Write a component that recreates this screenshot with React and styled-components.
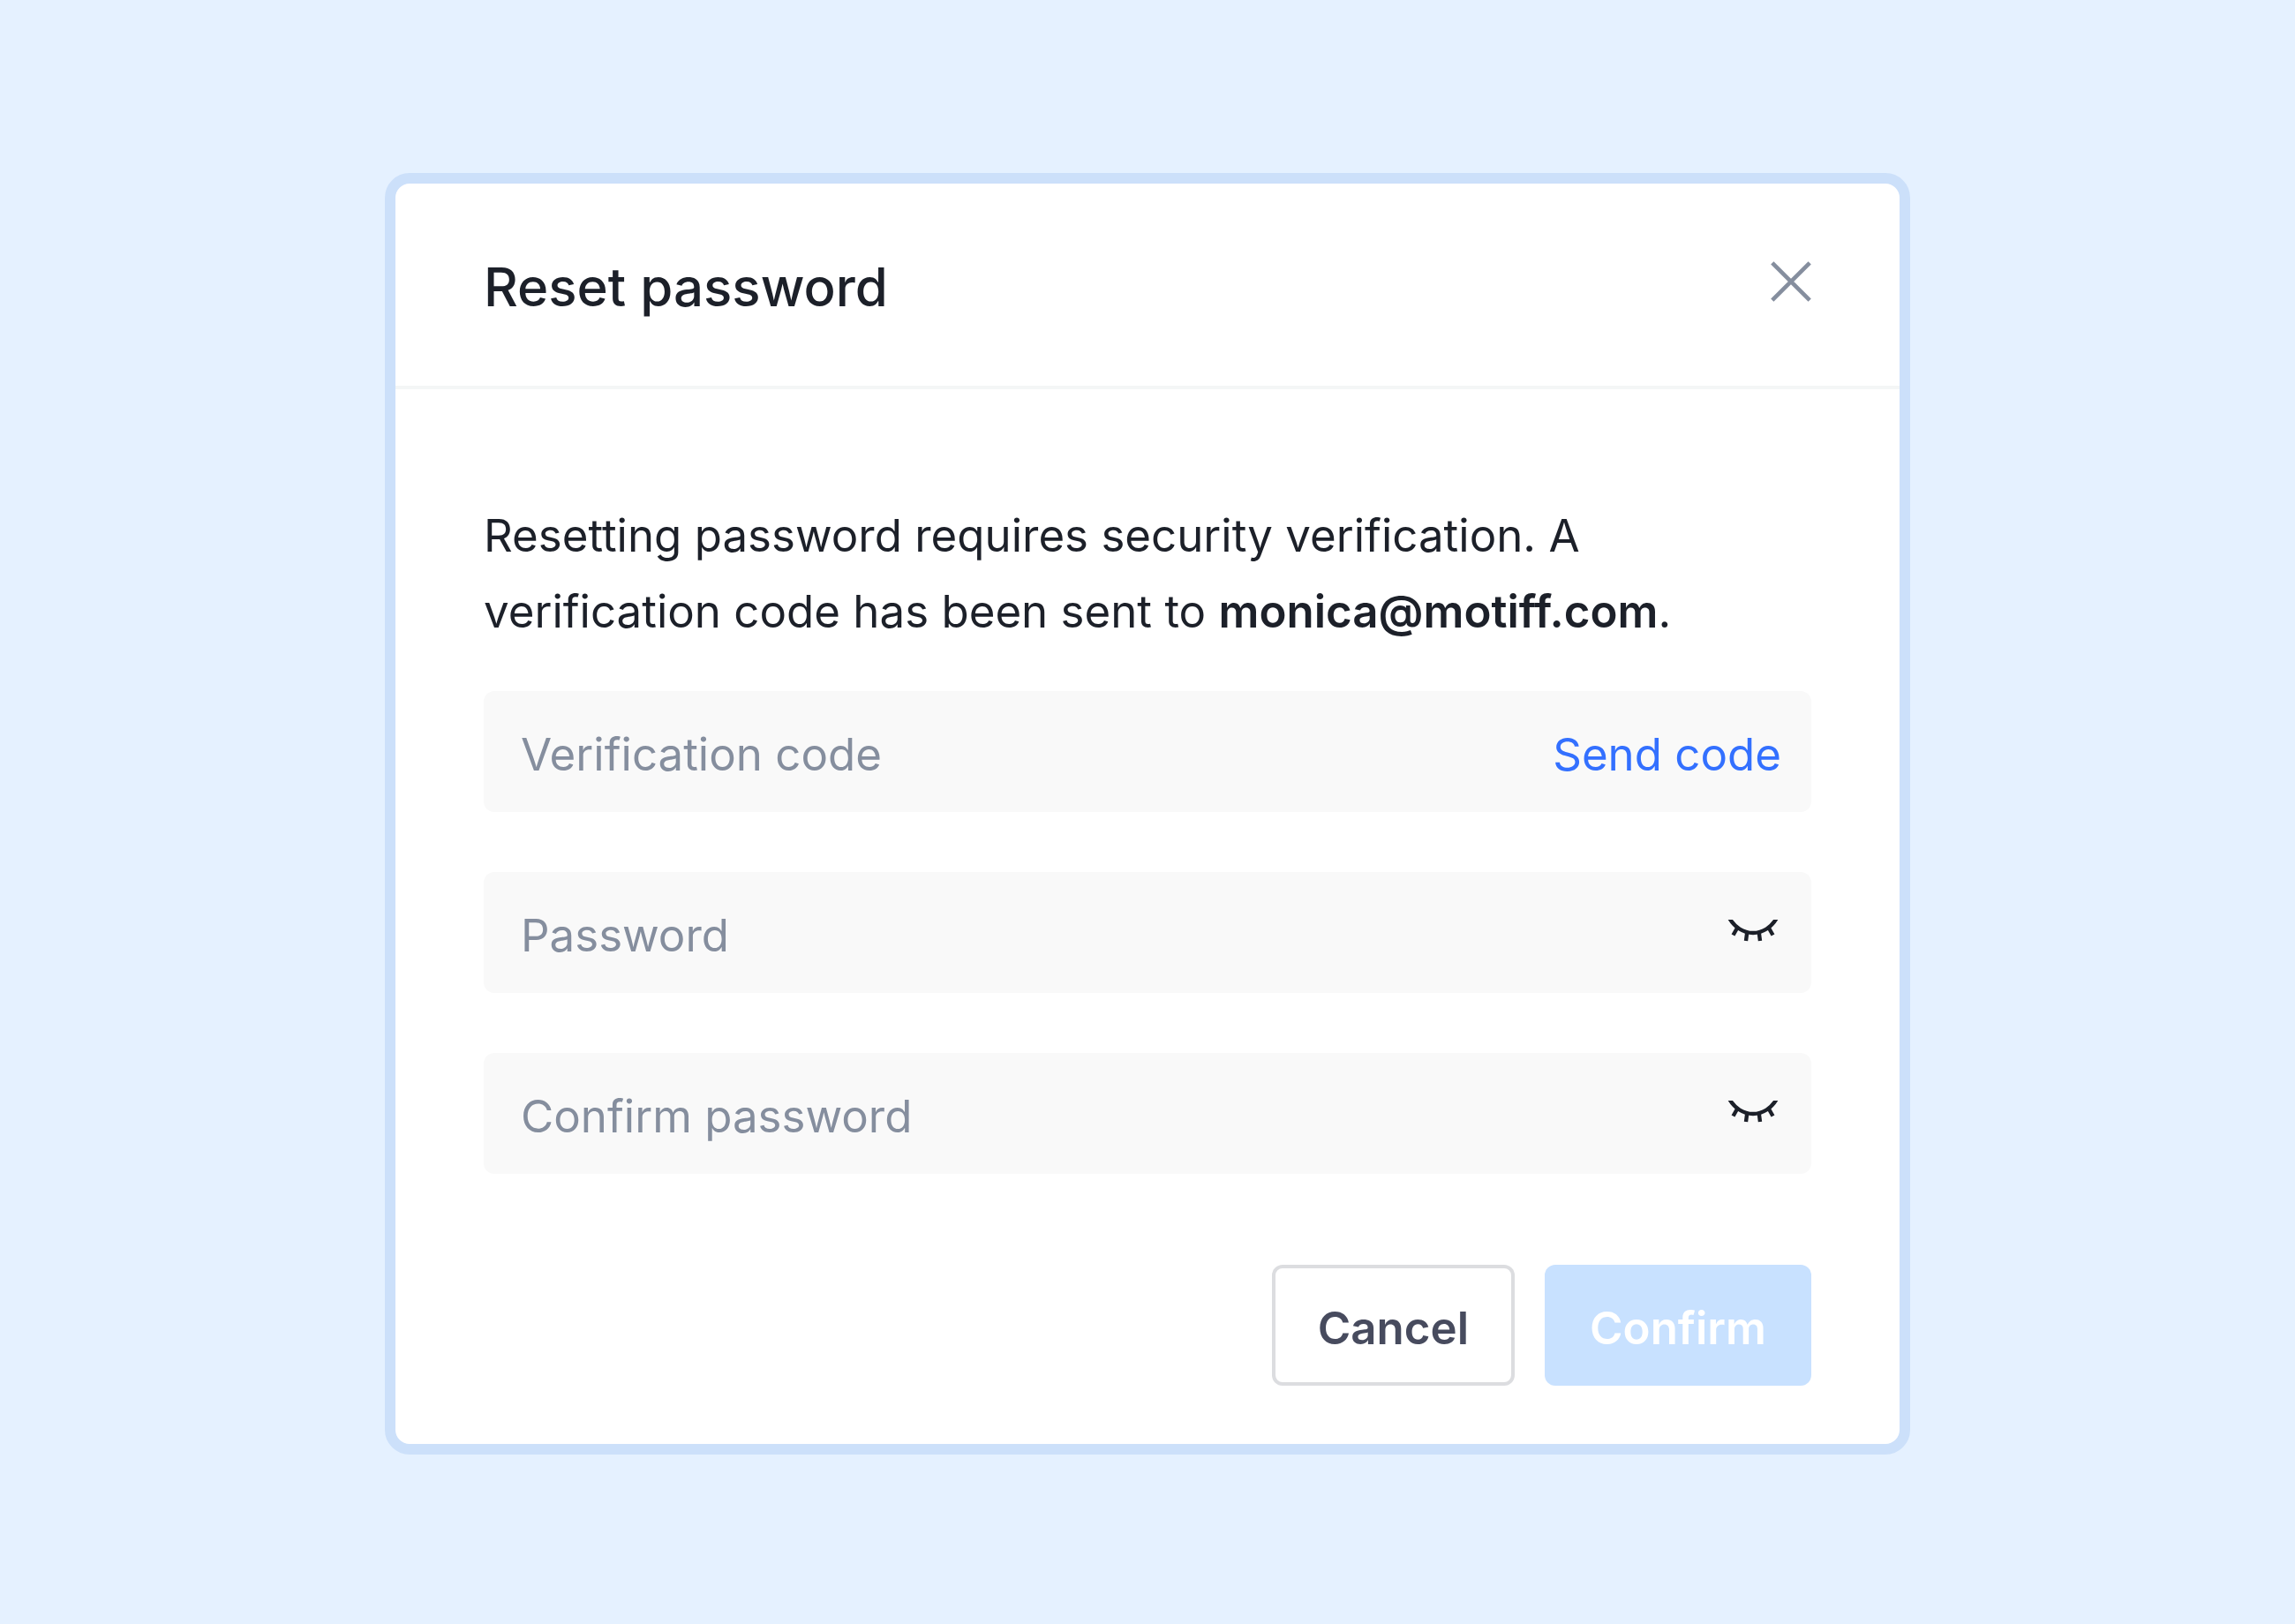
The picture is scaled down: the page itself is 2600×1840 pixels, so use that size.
import React, { useId, useState } from 'react';
import styled, { ThemeProvider, createGlobalStyle } from 'styled-components';

const theme = {
  colors: {
    page: '#e5f1ff',
    frame: '#cce0fa',
    text: '#1c2029',
    muted: '#858e9e',
    link: '#3370ff',
    field: '#f9f9f9',
    divider: '#f4f6f6',
    outline: '#dcdde0',
    cancel: '#474b5e',
    disabled: '#c8e1ff',
  },
  text: '51px',
  radius: '12px',
};

const GlobalStyle = createGlobalStyle`
  *, *::before, *::after {
    box-sizing: border-box;
  }
  body {
    margin: 0;
    background: ${theme.colors.page};
    font-family: Inter, 'Liberation Sans', sans-serif;
    color: ${theme.colors.text};
  }
  button, input {
    font: inherit;
    color: inherit;
    border: 0;
    margin: 0;
    padding: 0;
    background: none;
  }
  button {
    cursor: pointer;
  }
`;

const Page = styled.main`
  min-height: 100vh;
  padding: 196px 40px 192px;
`;

const Dialog = styled.section`
  max-width: 1728px;
  margin: 0 auto;
  background: white;
  border: 12px solid ${props => props.theme.colors.frame};
  border-radius: 28px;
`;

const Header = styled.header`
  display: flex;
  justify-content: space-between;
  align-items: flex-start;
  padding: 72px 100px 67px;
  border-bottom: 4px solid ${props => props.theme.colors.divider};
`;

const Title = styled.h1`
  margin: 0;
  font-size: 60px;
  font-weight: 500;
  line-height: 90px;
`;

const CloseButton = styled.button`
  height: 78px;
  color: ${props => props.theme.colors.muted};
  svg {
    display: block;
  }
`;

const Form = styled.form`
  padding: 123px 100px 66px;
  font-size: ${props => props.theme.text};
`;

const Message = styled.p`
  margin: 0 0 47px;
  line-height: 86px;
  strong {
    font-weight: 600;
  }
`;

const Fields = styled.div`
  display: flex;
  flex-direction: column;
  gap: 68px;
`;

const FieldRow = styled.div`
  display: flex;
  align-items: center;
  height: 137px;
  padding: 0 34px 0 42px;
  background: ${props => props.theme.colors.field};
  border-radius: ${props => props.theme.radius};
`;

const Input = styled.input`
  flex: 1;
  min-width: 0;
  height: 100%;
  padding-top: 6px;
  outline: none;
  &::placeholder {
    color: ${props => props.theme.colors.muted};
    opacity: 1;
  }
`;

const LinkButton = styled.button`
  height: 100%;
  padding-top: 6px;
  color: ${props => props.theme.colors.link};
`;

const IconButton = styled.button`
  svg {
    display: block;
  }
`;

const Actions = styled.footer`
  display: flex;
  justify-content: flex-end;
  gap: 34px;
  margin-top: 103px;
`;

const Button = styled.button`
  height: 137px;
  padding: 6px ${props => (props.$primary ? '51px' : '52px')} 0;
  font-weight: 600;
  border-radius: ${props => props.theme.radius};
  color: ${props => (props.$primary ? 'white' : props.theme.colors.cancel)};
  background: ${props => (props.$primary ? props.theme.colors.disabled : 'white')};
  box-shadow: ${props => (props.$primary ? 'none' : `inset 0 0 0 4px ${props.theme.colors.outline}`)};
`;

const CloseIcon = () => (
  <svg width="46" height="46" viewBox="0 0 46 46" fill="none" stroke="currentColor" strokeWidth="4.6" aria-hidden="true">
    <path d="M1.8 1.8 44.2 44.2M44.2 1.8 1.8 44.2" />
  </svg>
);

const ClosedEyeIcon = () => {
  const clip = useId();
  return (
    <svg width="64" height="64" viewBox="0 0 64 64" fill="none" stroke="currentColor" strokeWidth="4.4" aria-hidden="true">
      <clipPath id={clip}>
        <rect y="17" width="64" height="40" />
      </clipPath>
      <g clipPath={`url(#${clip})`}>
        <path d="M4.5 14C17.5 38 46.500 38 59.500 14" />
        <path d="M14.300 26 9.500 34.500M25.300 31 24 41M38.700 31 40 41M49.700 26 54.500 34.500" />
      </g>
    </svg>
  );
};

const PasswordField = ({ label }) => {
  const [visible, setVisible] = useState(false);
  return (
    <FieldRow>
      <Input type={visible ? 'text' : 'password'} placeholder={label} aria-label={label} />
      <IconButton type="button" aria-label="Toggle visibility" onClick={() => setVisible(!visible)}>
        <ClosedEyeIcon />
      </IconButton>
    </FieldRow>
  );
};

const App = () => (
  <ThemeProvider theme={theme}>
    <GlobalStyle />
    <Page>
      <Dialog role="dialog" aria-labelledby="dialog-title">
        <Header>
          <Title id="dialog-title">Reset password</Title>
          <CloseButton type="button" aria-label="Close">
            <CloseIcon />
          </CloseButton>
        </Header>
        <Form onSubmit={e => e.preventDefault()}>
          <Message>
            Resetting password requires security verification. A verification code has been sent to{' '}
            <strong>monica@motiff.com</strong>.
          </Message>
          <Fields>
            <FieldRow>
              <Input type="text" placeholder="Verification code" aria-label="Verification code" />
              <LinkButton type="button">Send code</LinkButton>
            </FieldRow>
            <PasswordField label="Password" />
            <PasswordField label="Confirm password" />
          </Fields>
          <Actions>
            <Button type="button">Cancel</Button>
            <Button type="submit" $primary disabled>
              Confirm
            </Button>
          </Actions>
        </Form>
      </Dialog>
    </Page>
  </ThemeProvider>
);

export default App;
